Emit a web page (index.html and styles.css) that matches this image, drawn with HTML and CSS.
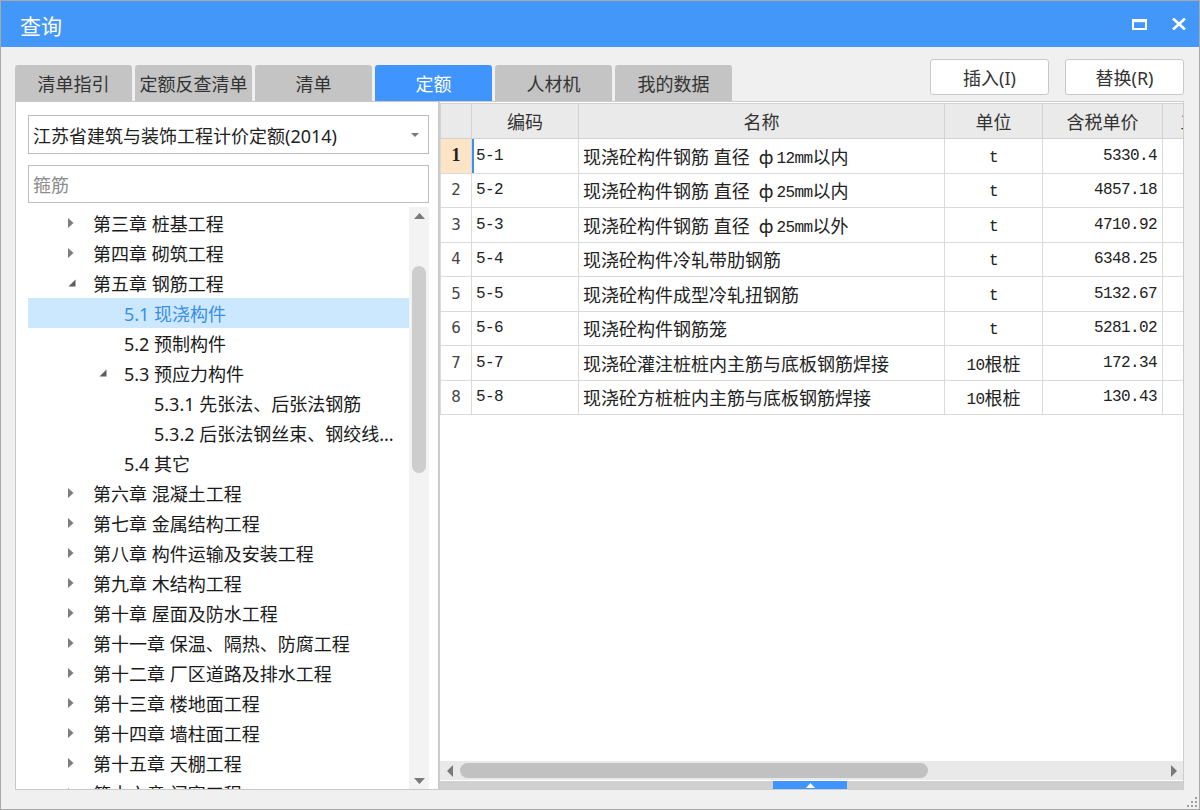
FILE: index.html
```html
<!DOCTYPE html>
<html lang="zh-CN">
<head>
<meta charset="utf-8">
<title>查询</title>
<link rel="stylesheet" href="styles.css">
</head>
<body>
<div class="window">
  <div class="titlebar">
    <span class="title">查询</span>
    <div class="wctl">
      <svg width="15" height="11" viewBox="0 0 15 11"><rect x="1" y="1.5" width="13" height="8.5" fill="none" stroke="#fff" stroke-width="2"/><rect x="0" y="0" width="15" height="3.2" fill="#fff"/></svg>
      <svg width="14" height="12" viewBox="0 0 14 12"><path d="M1 0.5 L13 11.5 M13 0.5 L1 11.5" stroke="#fff" stroke-width="2.6" fill="none"/></svg>
    </div>
  </div>
  <div class="content">
    <div class="toprow">
      <div class="tabs">
        <div class="tab">清单指引</div>
        <div class="tab">定额反查清单</div>
        <div class="tab">清单</div>
        <div class="tab active">定额</div>
        <div class="tab">人材机</div>
        <div class="tab">我的数据</div>
      </div>
      <div class="actions">
        <button class="btn">插入(I)</button>
        <button class="btn">替换(R)</button>
      </div>
    </div>
    <div class="main">
      <div class="left">
        <div class="combo">
          <span>江苏省建筑与装饰工程计价定额(2014)</span>
          <svg width="8" height="4" viewBox="0 0 8 4"><path d="M0 0 L8 0 L4 4Z" fill="#7a7a7a"/></svg>
        </div>
        <div class="search"><span class="ph">箍筋</span></div>
        <div class="treewrap">
          <div class="tree">
            <div class="row l0"><span class="arr"><svg class="ac" width="6" height="10" viewBox="0 0 6 10"><path d="M0 0 L5.5 5 L0 10Z"/></svg></span>第三章 桩基工程</div>
            <div class="row l0"><span class="arr"><svg class="ac" width="6" height="10" viewBox="0 0 6 10"><path d="M0 0 L5.5 5 L0 10Z"/></svg></span>第四章 砌筑工程</div>
            <div class="row l0"><span class="arr"><svg class="ae" width="8" height="8" viewBox="0 0 8 8"><path d="M7.5 0.5 L7.5 7.5 L0.5 7.5Z"/></svg></span>第五章 钢筋工程</div>
            <div class="row l1 sel"><span class="arr"></span>5.1 现浇构件</div>
            <div class="row l1"><span class="arr"></span>5.2 预制构件</div>
            <div class="row l1"><span class="arr"><svg class="ae" width="8" height="8" viewBox="0 0 8 8"><path d="M7.5 0.5 L7.5 7.5 L0.5 7.5Z"/></svg></span>5.3 预应力构件</div>
            <div class="row l2"><span class="arr"></span>5.3.1 先张法、后张法钢筋</div>
            <div class="row l2"><span class="arr"></span>5.3.2 后张法钢丝束、钢绞线...</div>
            <div class="row l1"><span class="arr"></span>5.4 其它</div>
            <div class="row l0"><span class="arr"><svg class="ac" width="6" height="10" viewBox="0 0 6 10"><path d="M0 0 L5.5 5 L0 10Z"/></svg></span>第六章 混凝土工程</div>
            <div class="row l0"><span class="arr"><svg class="ac" width="6" height="10" viewBox="0 0 6 10"><path d="M0 0 L5.5 5 L0 10Z"/></svg></span>第七章 金属结构工程</div>
            <div class="row l0"><span class="arr"><svg class="ac" width="6" height="10" viewBox="0 0 6 10"><path d="M0 0 L5.5 5 L0 10Z"/></svg></span>第八章 构件运输及安装工程</div>
            <div class="row l0"><span class="arr"><svg class="ac" width="6" height="10" viewBox="0 0 6 10"><path d="M0 0 L5.5 5 L0 10Z"/></svg></span>第九章 木结构工程</div>
            <div class="row l0"><span class="arr"><svg class="ac" width="6" height="10" viewBox="0 0 6 10"><path d="M0 0 L5.5 5 L0 10Z"/></svg></span>第十章 屋面及防水工程</div>
            <div class="row l0"><span class="arr"><svg class="ac" width="6" height="10" viewBox="0 0 6 10"><path d="M0 0 L5.5 5 L0 10Z"/></svg></span>第十一章 保温、隔热、防腐工程</div>
            <div class="row l0"><span class="arr"><svg class="ac" width="6" height="10" viewBox="0 0 6 10"><path d="M0 0 L5.5 5 L0 10Z"/></svg></span>第十二章 厂区道路及排水工程</div>
            <div class="row l0"><span class="arr"><svg class="ac" width="6" height="10" viewBox="0 0 6 10"><path d="M0 0 L5.5 5 L0 10Z"/></svg></span>第十三章 楼地面工程</div>
            <div class="row l0"><span class="arr"><svg class="ac" width="6" height="10" viewBox="0 0 6 10"><path d="M0 0 L5.5 5 L0 10Z"/></svg></span>第十四章 墙柱面工程</div>
            <div class="row l0"><span class="arr"><svg class="ac" width="6" height="10" viewBox="0 0 6 10"><path d="M0 0 L5.5 5 L0 10Z"/></svg></span>第十五章 天棚工程</div>
            <div class="row l0"><span class="arr"><svg class="ac" width="6" height="10" viewBox="0 0 6 10"><path d="M0 0 L5.5 5 L0 10Z"/></svg></span>第十六章 门窗工程</div>
          </div>
          <div class="vscroll">
            <svg class="sa" width="11" height="6" viewBox="0 0 11 6"><path d="M0 6 L5.5 0 L11 6Z"/></svg>
            <div class="vthumb"></div>
            <div class="spacer"></div>
            <svg class="sa" width="11" height="6" viewBox="0 0 11 6"><path d="M0 0 L11 0 L5.5 6Z"/></svg>
          </div>
        </div>
      </div>
      <div class="right">
        <div class="gridwrap">
          <table class="grid">
            <colgroup><col class="c-rn"><col class="c-code"><col class="c-name"><col class="c-unit"><col class="c-price"><col class="c-more"></colgroup>
            <thead>
              <tr><th></th><th>编码</th><th>名称</th><th>单位</th><th>含税单价</th><th>工料机</th></tr>
            </thead>
            <tbody>
              <tr><td class="rn cur">1</td><td class="code focus">5-1</td><td class="name">现浇砼构件钢筋 直径<span class="m"> </span><span class="phi">ф</span><span class="m">12mm</span>以内</td><td class="unit"><span class="m">t</span></td><td class="price">5330.4</td><td></td></tr>
              <tr><td class="rn">2</td><td class="code">5-2</td><td class="name">现浇砼构件钢筋 直径<span class="m"> </span><span class="phi">ф</span><span class="m">25mm</span>以内</td><td class="unit"><span class="m">t</span></td><td class="price">4857.18</td><td></td></tr>
              <tr><td class="rn">3</td><td class="code">5-3</td><td class="name">现浇砼构件钢筋 直径<span class="m"> </span><span class="phi">ф</span><span class="m">25mm</span>以外</td><td class="unit"><span class="m">t</span></td><td class="price">4710.92</td><td></td></tr>
              <tr><td class="rn">4</td><td class="code">5-4</td><td class="name">现浇砼构件冷轧带肋钢筋</td><td class="unit"><span class="m">t</span></td><td class="price">6348.25</td><td></td></tr>
              <tr><td class="rn">5</td><td class="code">5-5</td><td class="name">现浇砼构件成型冷轧扭钢筋</td><td class="unit"><span class="m">t</span></td><td class="price">5132.67</td><td></td></tr>
              <tr><td class="rn">6</td><td class="code">5-6</td><td class="name">现浇砼构件钢筋笼</td><td class="unit"><span class="m">t</span></td><td class="price">5281.02</td><td></td></tr>
              <tr><td class="rn">7</td><td class="code">5-7</td><td class="name">现浇砼灌注桩桩内主筋与底板钢筋焊接</td><td class="unit"><span class="m">10</span>根桩</td><td class="price">172.34</td><td></td></tr>
              <tr><td class="rn">8</td><td class="code">5-8</td><td class="name">现浇砼方桩桩内主筋与底板钢筋焊接</td><td class="unit"><span class="m">10</span>根桩</td><td class="price">130.43</td><td></td></tr>
            </tbody>
          </table>
        </div>
        <div class="hscroll">
          <svg class="sa" width="6" height="12" viewBox="0 0 6 12"><path d="M6 0 L0 6 L6 12Z"/></svg>
          <div class="hthumb"></div>
          <div class="spacer"></div>
          <svg class="sa" width="6" height="12" viewBox="0 0 6 12"><path d="M0 0 L6 6 L0 12Z"/></svg>
        </div>
        <div class="splitter">
          <div class="handle"><svg width="9" height="5" viewBox="0 0 9 5"><path d="M0 5 L4.5 0 L9 5Z" fill="#fff"/></svg></div>
        </div>
      </div>
    </div>
  </div>
  <svg class="grip" width="10" height="10" viewBox="0 0 10 10"><g fill="#a0a0a0"><rect x="8" y="0" width="2" height="2"/><rect x="8" y="4" width="2" height="2"/><rect x="4" y="4" width="2" height="2"/><rect x="8" y="8" width="2" height="2"/><rect x="4" y="8" width="2" height="2"/><rect x="0" y="8" width="2" height="2"/></g></svg>
</div>
</body>
</html>
```

FILE: styles.css
```css
* { box-sizing: border-box; }
html, body { margin: 0; padding: 0; }
body {
  width: 1200px;
  height: 810px;
  overflow: hidden;
  background: #f0f0f0;
  font-family: "Noto Sans", "Noto Sans CJK SC", sans-serif;
}
.window {
  position: relative;
  width: 1200px;
  height: 810px;
  border: 1px solid #a9a9a9;
  background: #f0f0f0;
  display: flex;
  flex-direction: column;
}
.titlebar {
  height: 46px;
  flex: none;
  background: #4297f8;
  display: flex;
  align-items: center;
  justify-content: space-between;
  padding: 0 13px 0 19px;
  color: #fff;
}
.title { font-size: 21px; line-height: 1; padding-top: 4px; }
.wctl { display: flex; align-items: center; gap: 25px; }
.wctl svg { display: block; }

.content {
  flex: 1;
  min-height: 0;
  display: flex;
  flex-direction: column;
  padding: 0 15px 19px 14px;
}
.toprow { height: 54px; flex: none; display: flex; justify-content: space-between; }
.tabs { display: flex; gap: 3px; margin-top: 18px; }
.tab {
  width: 117px;
  height: 36px;
  background: #c4c4c4;
  border-radius: 3px 3px 0 0;
  font-size: 18px;
  color: #333;
  display: flex;
  align-items: center;
  justify-content: center;
}
.tab.active { background: #3f95fd; color: #fff; }
.actions { display: flex; gap: 16px; margin-top: 12px; height: 36px; }
.btn {
  width: 119px;
  height: 36px;
  padding: 0;
  background: #fff;
  border: 1px solid #c9c9c9;
  border-radius: 3px;
  font: 18px "Noto Sans", "Noto Sans CJK SC", sans-serif;
  color: #333;
}

.main { flex: 1; min-height: 0; display: flex; }
.left {
  width: 424px;
  flex: none;
  background: #fff;
  border: 1px solid #c8c8c8;
  padding: 13px 9px 0 12px;
  display: flex;
  flex-direction: column;
}
.combo {
  height: 39px;
  flex: none;
  border: 1px solid #bdbdbd;
  display: flex;
  align-items: center;
  justify-content: space-between;
  padding: 0 9px 0 4px;
  font-size: 18px;
  color: #222;
}
.combo svg { display: block; }
.search {
  height: 38px;
  flex: none;
  margin-top: 11px;
  border: 1px solid #bdbdbd;
  display: flex;
  align-items: center;
  padding-left: 4px;
  font-size: 18px;
  color: #8c8c8c;
}
.treewrap { flex: 1; min-height: 0; margin-top: 4px; display: flex; overflow: hidden; }
.tree { flex: 1; padding-top: 1px; overflow: hidden; }
.row {
  height: 30px;
  display: flex;
  align-items: center;
  font-size: 18px;
  color: #1a1a1a;
  white-space: nowrap;
}
.row.l0 { padding-left: 40px; }
.row.l1 { padding-left: 71px; }
.row.l2 { padding-left: 101px; }
.row.sel { background: #cce8ff; color: #3a8ee8; }
.arr { width: 25px; flex: none; display: flex; align-items: center; }
.arr svg { display: block; }
.ac path { fill: #7d7d7d; }
.ae path { fill: #5e5e5e; }

.vscroll {
  width: 20px;
  flex: none;
  background: #f3f3f3;
  display: flex;
  flex-direction: column;
  align-items: center;
  padding: 6px 0 5px;
}
.sa { display: block; flex: none; }
.sa path { fill: #7a7a7a; }
.vthumb {
  width: 14px;
  height: 207px;
  margin-top: 47px;
  border-radius: 7px;
  background: #cdcdcd;
  flex: none;
}
.spacer { flex: 1; }

.right {
  flex: 1;
  min-width: 0;
  background: #fff;
  border: 1px solid #cdcdcd;
  display: flex;
  flex-direction: column;
}
.gridwrap { flex: 1; min-height: 0; overflow: hidden; padding-top: 1px; }
.grid { border-collapse: collapse; table-layout: fixed; width: 812px; }
.c-rn { width: 31px; }
.c-code { width: 107px; }
.c-name { width: 366px; }
.c-unit { width: 98px; }
.c-price { width: 120px; }
.c-more { width: 90px; }
.grid th {
  height: 35px;
  padding: 0;
  background: #eaeaea;
  border: 1px solid #d2d2d2;
  font-weight: normal;
  font-size: 18px;
  color: #333;
  text-align: center;
  white-space: nowrap;
  overflow: hidden;
}
.grid td {
  height: 34.5px;
  padding: 0 4px;
  border: 1px solid #dadada;
  font-size: 18px;
  color: #222;
  white-space: pre;
  overflow: hidden;
}
.grid td.rn {
  padding: 0;
  text-align: center;
  font-size: 15px;
  color: #444;
  font-family: "DejaVu Sans", sans-serif;
}
.grid td.rn.cur {
  background: #fde4c6;
  font-family: "Liberation Serif", serif;
  font-weight: bold;
  font-size: 18px;
  color: #222;
}
.grid td.code { font-family: "Liberation Mono", monospace; font-size: 16px; letter-spacing: -0.6px; }
.grid td.focus { box-shadow: inset 2px 0 0 #3b8ff0; }
.grid td.unit { text-align: center; }
.grid td.price { text-align: right; padding-right: 5px; font-family: "Liberation Mono", monospace; font-size: 16px; letter-spacing: -0.6px; }
.m { font-family: "Liberation Mono", monospace; font-size: 16px; letter-spacing: -0.6px; vertical-align: 1px; }
.phi { font-family: "Noto Sans CJK SC", sans-serif; font-size: 18px; padding-right: 3px; }

.hscroll {
  height: 19px;
  flex: none;
  background: #e9e9e9;
  display: flex;
  align-items: center;
  padding: 0 6px 0 7px;
}
.hthumb {
  width: 468px;
  height: 15px;
  margin-left: 7px;
  border-radius: 8px;
  background: #c1c1c1;
  flex: none;
}
.splitter {
  height: 9px;
  flex: none;
  border-top: 1px solid #fff;
  background: #d0d0d0;
  padding-left: 333px;
}
.handle {
  width: 74px;
  height: 8px;
  background: #3e95ff;
  display: flex;
  align-items: center;
  justify-content: center;
}
.handle svg { display: block; }
.grip { position: absolute; right: 2px; bottom: 2px; display: block; }
```
